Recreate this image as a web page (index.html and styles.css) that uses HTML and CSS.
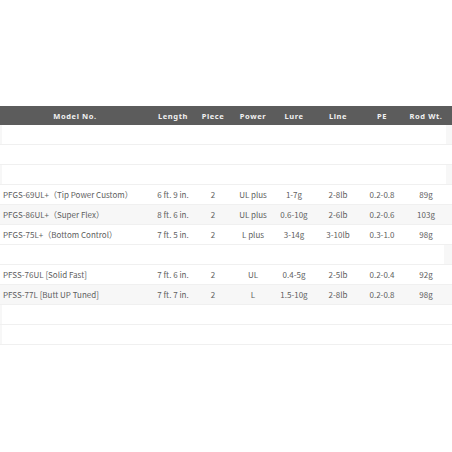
FILE: index.html
```html
<!DOCTYPE html>
<html>
<head>
<meta charset="utf-8">
<link rel="stylesheet" href="styles.css">
</head>
<body>
<div class="wrap">
<table class="spec">
<colgroup>
<col class="c-model"><col class="c-len"><col class="c-piece"><col class="c-power"><col class="c-lure"><col class="c-line"><col class="c-pe"><col class="c-rod">
</colgroup>
<thead>
<tr><th>Model No.</th><th>Length</th><th>Piece</th><th>Power</th><th>Lure</th><th>Line</th><th>PE</th><th>Rod Wt.</th></tr>
</thead>
<tbody>
<tr class="empty both"><td colspan="8"><div class="inner"></div></td></tr>
<tr class="empty plain"><td colspan="8"><div class="inner"></div></td></tr>
<tr class="empty both"><td colspan="8"><div class="inner"></div></td></tr>
<tr><td class="model">PFGS-69UL+（Tip Power Custom）</td><td>6 ft. 9 in.</td><td>2</td><td>UL plus</td><td>1-7g</td><td>2-8lb</td><td>0.2-0.8</td><td>89g</td></tr>
<tr class="alt"><td class="model">PFGS-86UL+（Super Flex）</td><td>8 ft. 6 in.</td><td>2</td><td>UL plus</td><td>0.6-10g</td><td>2-6lb</td><td>0.2-0.6</td><td>103g</td></tr>
<tr><td class="model">PFGS-75L+（Bottom Control）</td><td>7 ft. 5 in.</td><td>2</td><td>L plus</td><td>3-14g</td><td>3-10lb</td><td>0.3-1.0</td><td>98g</td></tr>
<tr class="empty right"><td colspan="8"><div class="inner"></div></td></tr>
<tr><td class="model">PFSS-76UL [Solid Fast]</td><td>7 ft. 6 in.</td><td>2</td><td>UL</td><td>0.4-5g</td><td>2-5lb</td><td>0.2-0.4</td><td>92g</td></tr>
<tr class="alt"><td class="model">PFSS-77L [Butt UP Tuned]</td><td>7 ft. 7 in.</td><td>2</td><td>L</td><td>1.5-10g</td><td>2-8lb</td><td>0.2-0.8</td><td>98g</td></tr>
<tr class="empty left"><td colspan="8"><div class="inner"></div></td></tr>
<tr class="empty left"><td colspan="8"><div class="inner"></div></td></tr>
</tbody>
</table>
</div>
</body>
</html>
```

FILE: styles.css
```css
html, body {
  margin: 0;
  padding: 0;
  background: #ffffff;
}
.wrap {
  padding-top: 106px;
}
.spec {
  width: 452px;
  border-collapse: collapse;
  table-layout: fixed;
  font-family: "Noto Sans CJK JP", "Noto Sans", sans-serif;
  font-size: 8px;
  color: #5e5e5e;
}
.c-model { width: 150px; }
.c-len { width: 46px; }
.c-piece { width: 34px; }
.c-power { width: 46px; }
.c-lure { width: 36px; }
.c-line { width: 52px; }
.c-pe { width: 36px; }
.c-rod { width: 52px; }
.spec th {
  background: #5c5c5c;
  color: #f2f2f2;
  font-family: "Noto Sans", sans-serif;
  font-weight: bold;
  font-size: 7.5px;
  letter-spacing: 0.6px;
  height: 19px;
  padding: 0;
  text-align: center;
}
.spec td {
  height: 19px;
  padding: 0;
  text-align: center;
  border-bottom: 1px solid #f0f0f0;
  white-space: nowrap;
}
.spec td.model {
  text-align: left;
  padding-left: 3px;
}
.spec tr.alt td {
  background: #f7f7f7;
}
.spec tr.empty td {
  background: #f7f7f7;
}
.spec tr.empty .inner {
  height: 19px;
  background: #ffffff;
}
.spec tr.both .inner {
  margin: 0 6px 0 2px;
}
.spec tr.plain .inner {
  margin: 0;
}
.spec tr.right .inner {
  margin: 0 8px 0 0;
}
.spec tr.left .inner {
  margin: 0 0 0 2px;
}
```
